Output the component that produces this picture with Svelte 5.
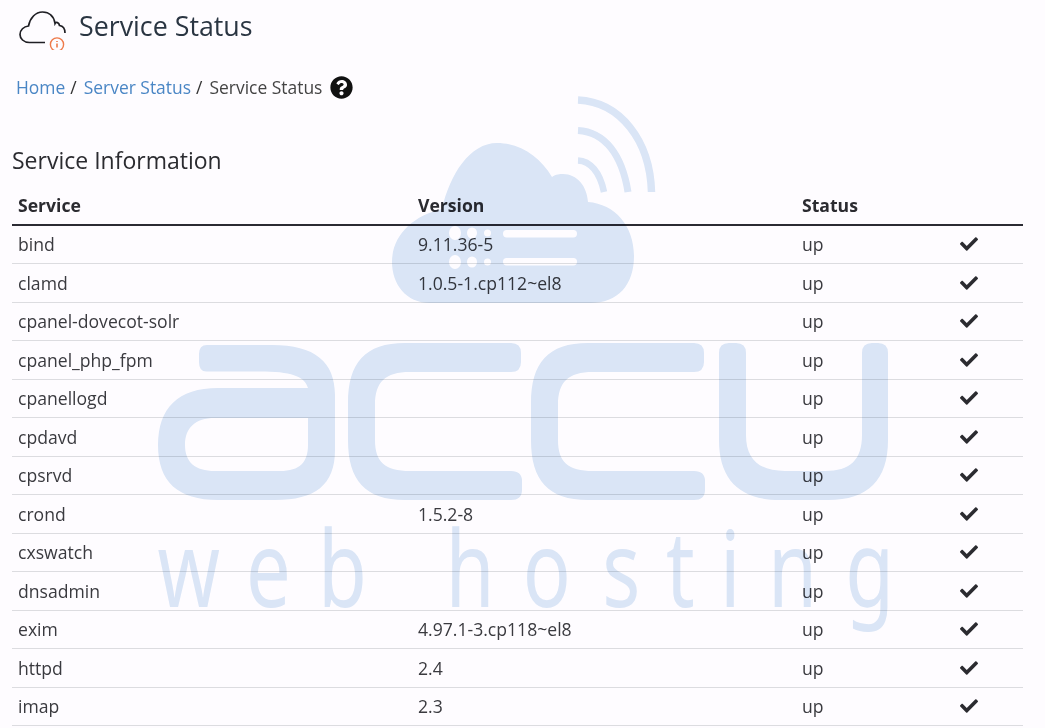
<script>
  const rows = [
    ['bind', '9.11.36-5'],
    ['clamd', '1.0.5-1.cp112~el8'],
    ['cpanel-dovecot-solr', ''],
    ['cpanel_php_fpm', ''],
    ['cpanellogd', ''],
    ['cpdavd', ''],
    ['cpsrvd', ''],
    ['crond', '1.5.2-8'],
    ['cxswatch', ''],
    ['dnsadmin', ''],
    ['exim', '4.97.1-3.cp118~el8'],
    ['httpd', '2.4'],
    ['imap', '2.3']
  ];
</script>

<div class="page">
  <header class="title">
    <svg class="logo" viewBox="0 0 50 40" width="50" height="40" aria-hidden="true">
      <path class="cloud-line" d="M26 32.5H10.5C4.5 32.5 1 28.5 1 24.5C1 20 4.7 16.5 9.5 16C11 8 16.5 2 23.5 2C30.5 2 35 6.5 36 13.5C37 11.5 40 12.5 40.5 15.5C44 16 46 19 46 23" />
      <circle class="badge" cx="38" cy="34.5" r="6.6" />
      <path class="badge-i" d="M38 33.6V37.6M38 31V32" />
    </svg>
    <h1>Service Status</h1>
  </header>

  <nav class="crumbs">
    <a href="#home">Home</a><span class="sep">/</span>
    <a href="#server">Server Status</a><span class="sep">/</span>
    <span class="current">Service Status</span>
    <svg class="help" viewBox="0 0 512 512" width="23" height="23" aria-hidden="true">
      <path d="M504 256c0 136.997-111.043 248-248 248S8 392.997 8 256C8 119.083 119.043 8 256 8s248 111.083 248 248zM262.655 90c-54.497 0-89.255 22.957-116.549 63.758-3.536 5.286-2.353 12.415 2.715 16.258l34.699 26.31c5.205 3.947 12.621 3.008 16.665-2.122 17.864-22.658 30.113-35.797 57.303-35.797 20.429 0 45.698 13.148 45.698 32.958 0 14.976-12.363 22.667-32.534 33.976C247.128 238.528 216 254.941 216 296v4c0 6.627 5.373 12 12 12h56c6.627 0 12-5.373 12-12v-1.333c0-28.462 83.186-29.647 83.186-106.667 0-58.002-60.165-102-116.531-102zM256 338c-25.365 0-46 20.635-46 46 0 25.364 20.635 46 46 46s46-20.636 46-46c0-25.365-20.635-46-46-46z" />
    </svg>
  </nav>

  <h2>Service Information</h2>

  <table>
    <thead>
      <tr>
        <th class="c1">Service</th>
        <th class="c2">Version</th>
        <th class="c3">Status</th>
        <th class="c4"></th>
      </tr>
    </thead>
    <tbody>
      {#each rows as r}
        <tr>
          <td>{r[0]}</td>
          <td>{r[1]}</td>
          <td>up</td>
          <td class="ok">
            <svg viewBox="0 0 512 512" width="18" height="18" aria-hidden="true">
              <path d="M173.898 439.404l-166.4-166.4c-9.997-9.997-9.997-26.206 0-36.204l36.203-36.204c9.997-9.998 26.207-9.998 36.204 0L192 312.69 432.095 72.596c9.997-9.997 26.207-9.997 36.204 0l36.203 36.204c9.997 9.997 9.997 26.206 0 36.204l-294.4 294.401c-9.998 9.997-26.207 9.997-36.204-.001z" />
            </svg>
          </td>
        </tr>
      {/each}
    </tbody>
  </table>

  <svg class="watermark" viewBox="0 0 1045 728" width="1045" height="728" aria-hidden="true">
    <path d="M430 303C406 303 392 284 392 262C392 236 412 216 442 209C450 174 470 143 497 143C520 143 540 157 552 177C556 174 560 174 563 174C577 174 587 186 588 202C615 204 634 226 634 256C634 285 618 303 590 303Z" />
    <g class="holes">
      <rect x="503" y="230" width="74" height="7.5" rx="3.7" />
      <rect x="503" y="258" width="74" height="7.5" rx="3.7" />
      <ellipse cx="455" cy="233" rx="6" ry="7" />
      <ellipse cx="472" cy="233" rx="5" ry="5.5" />
      <circle cx="487.5" cy="233" r="3.5" />
      <ellipse cx="455" cy="262" rx="6" ry="7" />
      <ellipse cx="472" cy="262" rx="5" ry="5.5" />
      <circle cx="487.5" cy="262" r="3.5" />
    </g>
    <g class="waves">
      <path stroke-width="7.5" d="M578 100C620 102 650 140 651.5 192" />
      <path stroke-width="7" d="M578 130.5C605 132 622 155 628 192" />
      <path stroke-width="6.5" d="M578 160.5C590 161 600 172 604 192" />
    </g>
    <path fill-rule="evenodd" d="M207 345H272C315 345 335 362 335 395V450C335 485 315 500 275 500H218C178 500 158 482 158 445C158 408 178 388 218 388H308C305 378 295 372 265 371.5H207Q199 372 199 362V354Q199 345 207 345ZM215 418C195 418 185 428 185 445C185 462 195 471 215 471H280C300 471 308 462 308 445V418Z" />
    <path id="c" d="M405 343H511Q521 343 521 353V362Q521 372 511 372H410C385 372 375 382 375 405V440C375 462 385 471 410 471H511Q522 471 522 481V490Q522 500 511 500H405C365 500 348 480 348 440V403C348 363 365 343 405 343Z" />
    <use href="#c" x="183" />
    <path d="M719 353Q719 343 729 343H736Q746 343 746 353V435C746 460 760 471 785 471H825C850 471 862 460 862 435V353Q862 343 872 343H878Q888 343 888 353V440C888 480 868 500 828 500H780C740 500 719 480 719 440Z" />
    <g transform="scale(0.75 1)">
      <text class="wm-text" y="607" x="210 328 424 594 697 803 888 960 1024 1127">webhosting</text>
    </g>
  </svg>
</div>

<style>
  :global(body) {
    margin: 0;
    background: #fefcff;
  }
  .page {
    position: relative;
    width: 1045px;
    height: 728px;
    overflow: hidden;
    box-sizing: border-box;
    padding: 0 22px 0 12px;
    font-family: "Open Sans", "Liberation Sans", sans-serif;
    color: #333;
  }
  .title {
    display: flex;
    align-items: center;
    gap: 10px;
    height: 54px;
    padding-left: 7px;
  }
  .logo {
    flex: none;
    margin-top: 5px;
  }
  .cloud-line {
    fill: none;
    stroke: #1f1f24;
    stroke-width: 1.7;
  }
  .badge {
    fill: none;
    stroke: #ee7a4a;
    stroke-width: 1.4;
  }
  .badge-i {
    fill: none;
    stroke: #ee7a4a;
    stroke-width: 1.6;
  }
  h1 {
    margin: 0 0 2px;
    font-size: 26.8px;
    font-weight: 400;
    line-height: 52px;
    color: #2a3542;
  }
  .crumbs {
    display: flex;
    align-items: center;
    height: 24px;
    margin-top: 21px;
    padding-left: 4px;
    font-size: 17.45px;
    line-height: 24px;
  }
  .crumbs a {
    color: #4a86c5;
    text-decoration: none;
  }
  .sep {
    margin: 0 7px 0 5px;
    color: #333;
  }
  .current {
    color: #444;
  }
  .help {
    margin-left: 8px;
    fill: #111;
  }
  h2 {
    margin: 46px 0 0;
    font-size: 23px;
    font-weight: 400;
    line-height: 30px;
    color: #2b2b30;
  }
  table {
    width: 1011px;
    margin-top: 12px;
    border-collapse: separate;
    border-spacing: 0;
    table-layout: fixed;
    font-size: 17.6px;
  }
  th {
    height: 38.5px;
    box-sizing: border-box;
    padding: 0 6px;
    text-align: left;
    font-weight: 700;
    color: #2b2b30;
    border-bottom: 2px solid #2b2b33;
  }
  td {
    height: 38.5px;
    box-sizing: border-box;
    padding: 0 6px;
    color: #3a3a3f;
    border-bottom: 1px solid #dcdce0;
  }
  .c1 { width: 400px; }
  .c2 { width: 384px; }
  .c3 { width: 158px; }
  .ok {
    padding: 0 0 0 6px;
    line-height: 0;
  }
  .ok svg {
    fill: #2b2b30;
  }
  .watermark {
    position: absolute;
    top: 0;
    left: 0;
    pointer-events: none;
    mix-blend-mode: multiply;
    fill: #dbe8f6;
  }
  .holes {
    fill: #ffffff;
  }
  .waves {
    fill: none;
    stroke: #dbe8f6;
  }
  .wm-text {
    font-family: "Noto Sans", sans-serif;
    font-size: 106px;
    font-weight: 400;
  }
</style>
